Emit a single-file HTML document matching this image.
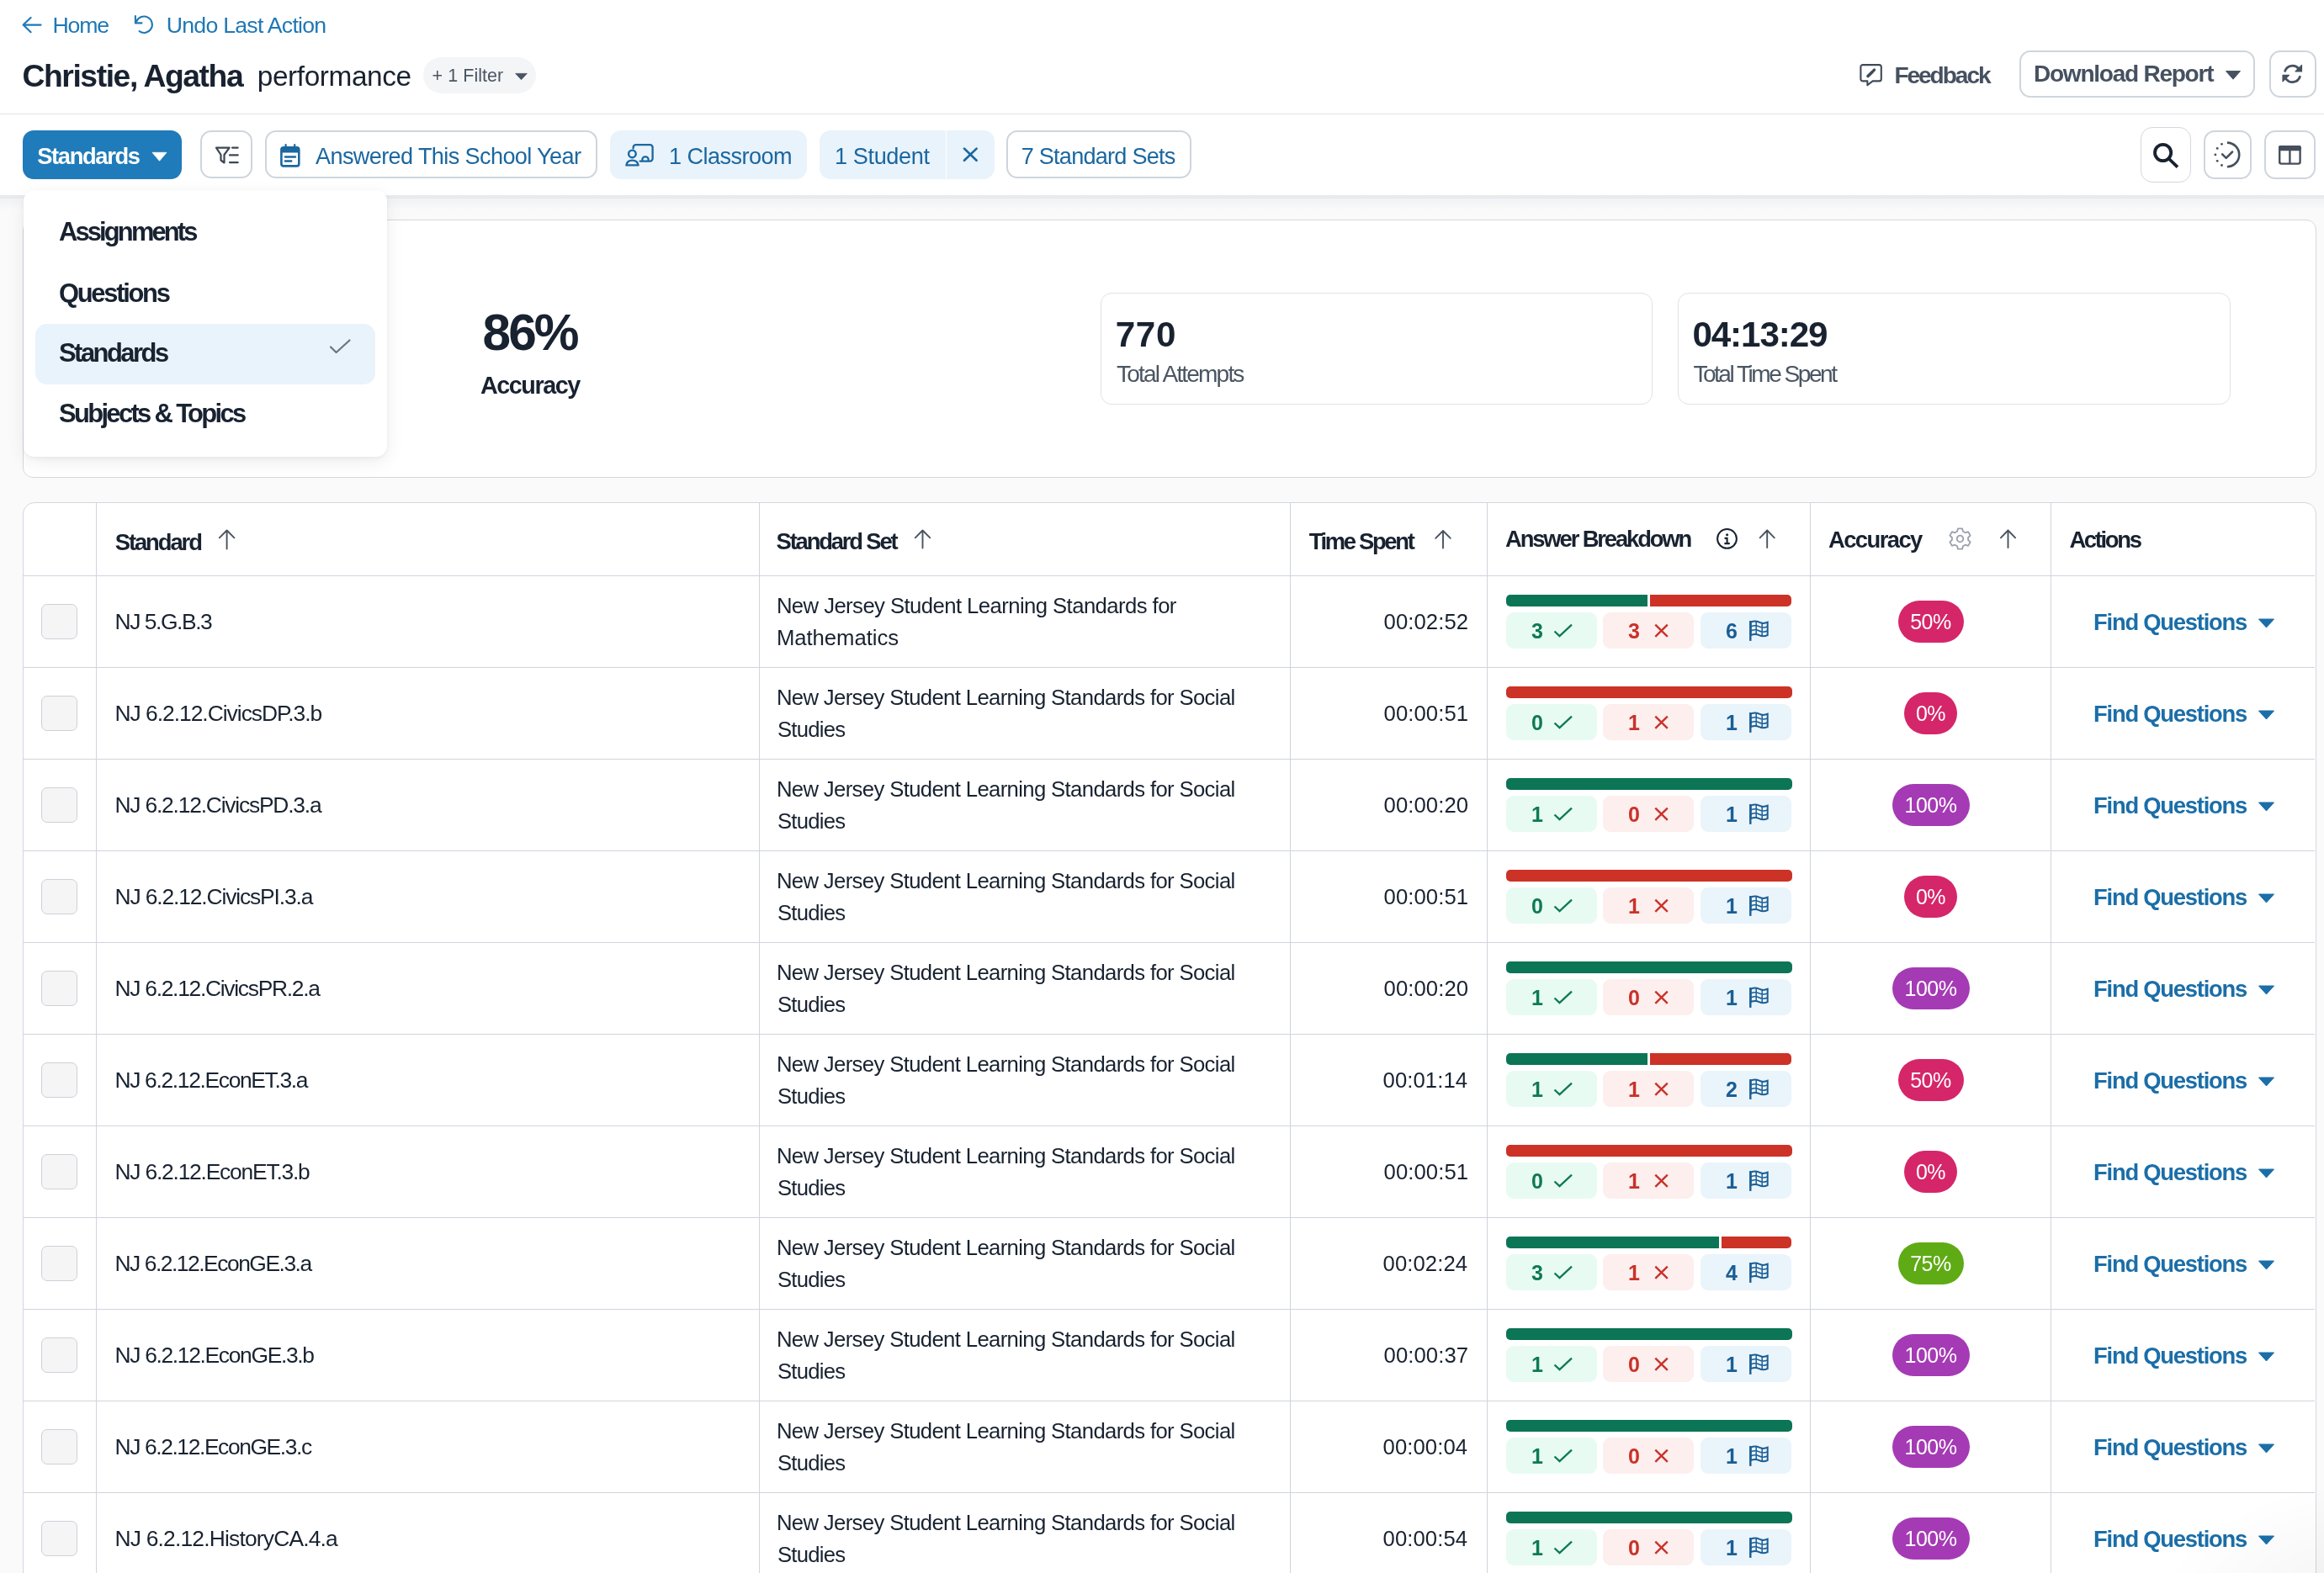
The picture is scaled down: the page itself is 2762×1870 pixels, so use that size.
<!DOCTYPE html><html><head><meta charset="utf-8"><style>
*{box-sizing:border-box;margin:0;padding:0}
html,body{width:2762px;height:1870px;overflow:hidden;background:#fafafb;font-family:"Liberation Sans",sans-serif}
.t{position:absolute;white-space:nowrap}
.abs{position:absolute}
.ic{position:absolute;display:block}
.hdr{position:absolute;left:0;top:0;width:2762px;height:232px;background:#fff}
.hline{position:absolute;left:0;top:135px;width:2762px;height:1px;background:#dfe2e7}
.btn{position:absolute;border:2px solid #cfd5dd;border-radius:13px;background:#fff}
.chip{position:absolute;border-radius:13px;background:#e9f3fb}
.card{position:absolute;background:#fff;border:1px solid #d3d7de;border-radius:12px}
.box{position:absolute;background:#fff;border:1px solid #dfe2e7;border-radius:13px}
.hl{position:absolute;left:28px;width:2723px;height:1px;background:#d0d4dc}
.vl{position:absolute;top:598px;width:1px;height:1280px;background:#d0d4dc}
.cb{position:absolute;left:49px;width:43px;height:42.5px;border:1px solid #cdd1d8;border-radius:7px;background:#f5f5f6}
.bar{position:absolute;height:14px}
.pill{position:absolute;width:108px;height:43px;border-radius:9px}
.pd{position:absolute;width:40px;height:43px;line-height:45px;text-align:center;font-weight:700;font-size:25px;background:transparent!important}
.pg{background:#e8fbf2;color:#0e7a55}
.pr{background:#fcefee;color:#c9322a}
.pb{background:#eaf4fb;color:#1a5e95}
.badge{position:absolute;height:50px;border-radius:25px;color:#fff;font-size:25px;line-height:50px;text-align:center;letter-spacing:-0.5px}
</style></head><body><div style="position:absolute;left:0;top:0;width:2762px;height:1870px;will-change:transform"><div class="hdr"></div><div class="hline"></div><div class="abs" style="left:0;top:232px;width:2762px;height:4px;background:#e9eaed"></div><div class="abs" style="left:0;top:236px;width:2762px;height:14px;background:linear-gradient(#f1f2f3,#fafafb)"></div><div class="abs" style="left:27px;top:155px;width:189px;height:58px;background:#1f7bb9;border-radius:13px"></div><div class="btn" style="left:238px;top:155px;width:62px;height:57px"></div><div class="btn" style="left:315px;top:155px;width:395px;height:57px"></div><div class="chip" style="left:725px;top:155px;width:234px;height:57.5px"></div><div class="chip" style="left:974px;top:155px;width:208px;height:57.5px"></div><div class="abs" style="left:1123.5px;top:155px;width:1.5px;height:57px;background:#fff"></div><div class="btn" style="left:1196px;top:155px;width:220px;height:57px"></div><div class="abs" style="left:503px;top:68px;width:134px;height:43px;background:#f4f5f6;border-radius:22px"></div><div class="btn" style="left:2400px;top:59.5px;width:280px;height:56px"></div><div class="btn" style="left:2696.5px;top:59.5px;width:56px;height:56px"></div><div class="btn" style="left:2544px;top:151px;width:59.5px;height:65.5px;border:1px solid #d3d7dd;border-radius:14px"></div><div class="btn" style="left:2619px;top:155px;width:56.5px;height:57.5px"></div><div class="btn" style="left:2690.7px;top:155px;width:61.5px;height:57.5px"></div><div class="card" style="left:27px;top:261px;width:2725.5px;height:307px"></div><div class="box" style="left:1308px;top:348px;width:656px;height:133px"></div><div class="box" style="left:1994px;top:348px;width:657px;height:133px"></div><div class="card" style="left:27px;top:597px;width:2725.5px;height:1400px;border-radius:14px;overflow:hidden"></div><div class="hl" style="top:684px"></div><div class="vl" style="left:114px"></div><div class="vl" style="left:902px"></div><div class="vl" style="left:1533px"></div><div class="vl" style="left:1767px"></div><div class="vl" style="left:2151px"></div><div class="vl" style="left:2437px"></div><div class="hl" style="top:793px"></div><div class="cb" style="top:717.5px"></div><div class="t" style="left:136.5px;top:726.3px;font-size:26.4px;line-height:26.4px;font-weight:400;color:#182230;letter-spacing:-1.42px;">NJ 5.G.B.3</div><div class="t" style="left:922.9px;top:708.4px;font-size:25.7px;line-height:25.7px;font-weight:400;color:#182230;letter-spacing:-0.57px;">New Jersey Student Learning Standards for</div><div class="t" style="left:922.9px;top:746.2px;font-size:25.7px;line-height:25.7px;font-weight:400;color:#182230;letter-spacing:-0.04px;">Mathematics</div><div class="t" style="left:1644.6px;top:726.7px;font-size:25.7px;line-height:25.7px;font-weight:400;color:#182230;letter-spacing:0.07px">00:02:52</div><div class="bar" style="top:707.1px;left:1790px;width:168.2px;background:#0b7555;border-radius:5px 0 0 5px"></div><div class="bar" style="top:707.1px;left:1961.2px;width:168.2px;background:#cc3226;border-radius:0 5px 5px 0"></div><div class="pill pg" style="top:727.9px;left:1790px"></div><div class="pd pg" style="top:727.9px;left:1807px">3</div><div class="pill pr" style="top:727.9px;left:1905px"></div><div class="pd pr" style="top:727.9px;left:1922px">3</div><div class="pill pb" style="top:727.9px;left:2021px"></div><div class="pd pb" style="top:727.9px;left:2038px">6</div><div class="badge" style="top:714.3px;left:2255.5px;width:78px;background:#d5266a">50%</div><div class="t" style="left:2488.0px;top:726.2px;font-size:27.4px;line-height:27.4px;font-weight:700;color:#1b6ea8;letter-spacing:-1.23px;">Find Questions</div><div class="hl" style="top:902px"></div><div class="cb" style="top:826.5px"></div><div class="t" style="left:136.5px;top:835.3px;font-size:26.4px;line-height:26.4px;font-weight:400;color:#182230;letter-spacing:-1.01px;">NJ 6.2.12.CivicsDP.3.b</div><div class="t" style="left:922.9px;top:817.4px;font-size:25.7px;line-height:25.7px;font-weight:400;color:#182230;letter-spacing:-0.64px;">New Jersey Student Learning Standards for Social</div><div class="t" style="left:923.9px;top:855.2px;font-size:25.7px;line-height:25.7px;font-weight:400;color:#182230;letter-spacing:-0.73px;">Studies</div><div class="t" style="left:1644.6px;top:835.7px;font-size:25.7px;line-height:25.7px;font-weight:400;color:#182230;letter-spacing:0.07px">00:00:51</div><div class="bar" style="top:816.1px;left:1790px;width:339.5px;background:#cc3226;border-radius:5px"></div><div class="pill pg" style="top:836.9px;left:1790px"></div><div class="pd pg" style="top:836.9px;left:1807px">0</div><div class="pill pr" style="top:836.9px;left:1905px"></div><div class="pd pr" style="top:836.9px;left:1922px">1</div><div class="pill pb" style="top:836.9px;left:2021px"></div><div class="pd pb" style="top:836.9px;left:2038px">1</div><div class="badge" style="top:823.3px;left:2263.0px;width:63px;background:#d5266a">0%</div><div class="t" style="left:2488.0px;top:835.2px;font-size:27.4px;line-height:27.4px;font-weight:700;color:#1b6ea8;letter-spacing:-1.23px;">Find Questions</div><div class="hl" style="top:1011px"></div><div class="cb" style="top:935.5px"></div><div class="t" style="left:136.5px;top:944.3px;font-size:26.4px;line-height:26.4px;font-weight:400;color:#182230;letter-spacing:-1.20px;">NJ 6.2.12.CivicsPD.3.a</div><div class="t" style="left:922.9px;top:926.4px;font-size:25.7px;line-height:25.7px;font-weight:400;color:#182230;letter-spacing:-0.64px;">New Jersey Student Learning Standards for Social</div><div class="t" style="left:923.9px;top:964.2px;font-size:25.7px;line-height:25.7px;font-weight:400;color:#182230;letter-spacing:-0.73px;">Studies</div><div class="t" style="left:1644.6px;top:944.7px;font-size:25.7px;line-height:25.7px;font-weight:400;color:#182230;letter-spacing:0.07px">00:00:20</div><div class="bar" style="top:925.1px;left:1790px;width:339.5px;background:#0b7555;border-radius:5px"></div><div class="pill pg" style="top:945.9px;left:1790px"></div><div class="pd pg" style="top:945.9px;left:1807px">1</div><div class="pill pr" style="top:945.9px;left:1905px"></div><div class="pd pr" style="top:945.9px;left:1922px">0</div><div class="pill pb" style="top:945.9px;left:2021px"></div><div class="pd pb" style="top:945.9px;left:2038px">1</div><div class="badge" style="top:932.3px;left:2248.5px;width:92px;background:#a53ab5">100%</div><div class="t" style="left:2488.0px;top:944.2px;font-size:27.4px;line-height:27.4px;font-weight:700;color:#1b6ea8;letter-spacing:-1.23px;">Find Questions</div><div class="hl" style="top:1120px"></div><div class="cb" style="top:1044.5px"></div><div class="t" style="left:136.5px;top:1053.3px;font-size:26.4px;line-height:26.4px;font-weight:400;color:#182230;letter-spacing:-1.13px;">NJ 6.2.12.CivicsPI.3.a</div><div class="t" style="left:922.9px;top:1035.4px;font-size:25.7px;line-height:25.7px;font-weight:400;color:#182230;letter-spacing:-0.64px;">New Jersey Student Learning Standards for Social</div><div class="t" style="left:923.9px;top:1073.2px;font-size:25.7px;line-height:25.7px;font-weight:400;color:#182230;letter-spacing:-0.73px;">Studies</div><div class="t" style="left:1644.6px;top:1053.7px;font-size:25.7px;line-height:25.7px;font-weight:400;color:#182230;letter-spacing:0.07px">00:00:51</div><div class="bar" style="top:1034.1px;left:1790px;width:339.5px;background:#cc3226;border-radius:5px"></div><div class="pill pg" style="top:1054.9px;left:1790px"></div><div class="pd pg" style="top:1054.9px;left:1807px">0</div><div class="pill pr" style="top:1054.9px;left:1905px"></div><div class="pd pr" style="top:1054.9px;left:1922px">1</div><div class="pill pb" style="top:1054.9px;left:2021px"></div><div class="pd pb" style="top:1054.9px;left:2038px">1</div><div class="badge" style="top:1041.3px;left:2263.0px;width:63px;background:#d5266a">0%</div><div class="t" style="left:2488.0px;top:1053.2px;font-size:27.4px;line-height:27.4px;font-weight:700;color:#1b6ea8;letter-spacing:-1.23px;">Find Questions</div><div class="hl" style="top:1229px"></div><div class="cb" style="top:1153.5px"></div><div class="t" style="left:136.5px;top:1162.3px;font-size:26.4px;line-height:26.4px;font-weight:400;color:#182230;letter-spacing:-1.28px;">NJ 6.2.12.CivicsPR.2.a</div><div class="t" style="left:922.9px;top:1144.4px;font-size:25.7px;line-height:25.7px;font-weight:400;color:#182230;letter-spacing:-0.64px;">New Jersey Student Learning Standards for Social</div><div class="t" style="left:923.9px;top:1182.2px;font-size:25.7px;line-height:25.7px;font-weight:400;color:#182230;letter-spacing:-0.73px;">Studies</div><div class="t" style="left:1644.6px;top:1162.7px;font-size:25.7px;line-height:25.7px;font-weight:400;color:#182230;letter-spacing:0.07px">00:00:20</div><div class="bar" style="top:1143.1px;left:1790px;width:339.5px;background:#0b7555;border-radius:5px"></div><div class="pill pg" style="top:1163.9px;left:1790px"></div><div class="pd pg" style="top:1163.9px;left:1807px">1</div><div class="pill pr" style="top:1163.9px;left:1905px"></div><div class="pd pr" style="top:1163.9px;left:1922px">0</div><div class="pill pb" style="top:1163.9px;left:2021px"></div><div class="pd pb" style="top:1163.9px;left:2038px">1</div><div class="badge" style="top:1150.3px;left:2248.5px;width:92px;background:#a53ab5">100%</div><div class="t" style="left:2488.0px;top:1162.2px;font-size:27.4px;line-height:27.4px;font-weight:700;color:#1b6ea8;letter-spacing:-1.23px;">Find Questions</div><div class="hl" style="top:1338px"></div><div class="cb" style="top:1262.5px"></div><div class="t" style="left:136.5px;top:1271.3px;font-size:26.4px;line-height:26.4px;font-weight:400;color:#182230;letter-spacing:-1.33px;">NJ 6.2.12.EconET.3.a</div><div class="t" style="left:922.9px;top:1253.4px;font-size:25.7px;line-height:25.7px;font-weight:400;color:#182230;letter-spacing:-0.64px;">New Jersey Student Learning Standards for Social</div><div class="t" style="left:923.9px;top:1291.2px;font-size:25.7px;line-height:25.7px;font-weight:400;color:#182230;letter-spacing:-0.73px;">Studies</div><div class="t" style="left:1643.6px;top:1271.7px;font-size:25.7px;line-height:25.7px;font-weight:400;color:#182230;letter-spacing:0.07px">00:01:14</div><div class="bar" style="top:1252.1px;left:1790px;width:168.2px;background:#0b7555;border-radius:5px 0 0 5px"></div><div class="bar" style="top:1252.1px;left:1961.2px;width:168.2px;background:#cc3226;border-radius:0 5px 5px 0"></div><div class="pill pg" style="top:1272.9px;left:1790px"></div><div class="pd pg" style="top:1272.9px;left:1807px">1</div><div class="pill pr" style="top:1272.9px;left:1905px"></div><div class="pd pr" style="top:1272.9px;left:1922px">1</div><div class="pill pb" style="top:1272.9px;left:2021px"></div><div class="pd pb" style="top:1272.9px;left:2038px">2</div><div class="badge" style="top:1259.3px;left:2255.5px;width:78px;background:#d5266a">50%</div><div class="t" style="left:2488.0px;top:1271.2px;font-size:27.4px;line-height:27.4px;font-weight:700;color:#1b6ea8;letter-spacing:-1.23px;">Find Questions</div><div class="hl" style="top:1447px"></div><div class="cb" style="top:1371.5px"></div><div class="t" style="left:136.5px;top:1380.3px;font-size:26.4px;line-height:26.4px;font-weight:400;color:#182230;letter-spacing:-1.21px;">NJ 6.2.12.EconET.3.b</div><div class="t" style="left:922.9px;top:1362.4px;font-size:25.7px;line-height:25.7px;font-weight:400;color:#182230;letter-spacing:-0.64px;">New Jersey Student Learning Standards for Social</div><div class="t" style="left:923.9px;top:1400.2px;font-size:25.7px;line-height:25.7px;font-weight:400;color:#182230;letter-spacing:-0.73px;">Studies</div><div class="t" style="left:1644.6px;top:1380.7px;font-size:25.7px;line-height:25.7px;font-weight:400;color:#182230;letter-spacing:0.07px">00:00:51</div><div class="bar" style="top:1361.1px;left:1790px;width:339.5px;background:#cc3226;border-radius:5px"></div><div class="pill pg" style="top:1381.9px;left:1790px"></div><div class="pd pg" style="top:1381.9px;left:1807px">0</div><div class="pill pr" style="top:1381.9px;left:1905px"></div><div class="pd pr" style="top:1381.9px;left:1922px">1</div><div class="pill pb" style="top:1381.9px;left:2021px"></div><div class="pd pb" style="top:1381.9px;left:2038px">1</div><div class="badge" style="top:1368.3px;left:2263.0px;width:63px;background:#d5266a">0%</div><div class="t" style="left:2488.0px;top:1380.2px;font-size:27.4px;line-height:27.4px;font-weight:700;color:#1b6ea8;letter-spacing:-1.23px;">Find Questions</div><div class="hl" style="top:1556px"></div><div class="cb" style="top:1480.5px"></div><div class="t" style="left:136.5px;top:1489.3px;font-size:26.4px;line-height:26.4px;font-weight:400;color:#182230;letter-spacing:-1.47px;">NJ 6.2.12.EconGE.3.a</div><div class="t" style="left:922.9px;top:1471.4px;font-size:25.7px;line-height:25.7px;font-weight:400;color:#182230;letter-spacing:-0.64px;">New Jersey Student Learning Standards for Social</div><div class="t" style="left:923.9px;top:1509.2px;font-size:25.7px;line-height:25.7px;font-weight:400;color:#182230;letter-spacing:-0.73px;">Studies</div><div class="t" style="left:1643.6px;top:1489.7px;font-size:25.7px;line-height:25.7px;font-weight:400;color:#182230;letter-spacing:0.07px">00:02:24</div><div class="bar" style="top:1470.1px;left:1790px;width:253.1px;background:#0b7555;border-radius:5px 0 0 5px"></div><div class="bar" style="top:1470.1px;left:2046.1px;width:83.4px;background:#cc3226;border-radius:0 5px 5px 0"></div><div class="pill pg" style="top:1490.9px;left:1790px"></div><div class="pd pg" style="top:1490.9px;left:1807px">3</div><div class="pill pr" style="top:1490.9px;left:1905px"></div><div class="pd pr" style="top:1490.9px;left:1922px">1</div><div class="pill pb" style="top:1490.9px;left:2021px"></div><div class="pd pb" style="top:1490.9px;left:2038px">4</div><div class="badge" style="top:1477.3px;left:2255.5px;width:78px;background:#5fab15">75%</div><div class="t" style="left:2488.0px;top:1489.2px;font-size:27.4px;line-height:27.4px;font-weight:700;color:#1b6ea8;letter-spacing:-1.23px;">Find Questions</div><div class="hl" style="top:1665px"></div><div class="cb" style="top:1589.5px"></div><div class="t" style="left:136.5px;top:1598.3px;font-size:26.4px;line-height:26.4px;font-weight:400;color:#182230;letter-spacing:-1.32px;">NJ 6.2.12.EconGE.3.b</div><div class="t" style="left:922.9px;top:1580.4px;font-size:25.7px;line-height:25.7px;font-weight:400;color:#182230;letter-spacing:-0.64px;">New Jersey Student Learning Standards for Social</div><div class="t" style="left:923.9px;top:1618.2px;font-size:25.7px;line-height:25.7px;font-weight:400;color:#182230;letter-spacing:-0.73px;">Studies</div><div class="t" style="left:1644.6px;top:1598.7px;font-size:25.7px;line-height:25.7px;font-weight:400;color:#182230;letter-spacing:0.07px">00:00:37</div><div class="bar" style="top:1579.1px;left:1790px;width:339.5px;background:#0b7555;border-radius:5px"></div><div class="pill pg" style="top:1599.9px;left:1790px"></div><div class="pd pg" style="top:1599.9px;left:1807px">1</div><div class="pill pr" style="top:1599.9px;left:1905px"></div><div class="pd pr" style="top:1599.9px;left:1922px">0</div><div class="pill pb" style="top:1599.9px;left:2021px"></div><div class="pd pb" style="top:1599.9px;left:2038px">1</div><div class="badge" style="top:1586.3px;left:2248.5px;width:92px;background:#a53ab5">100%</div><div class="t" style="left:2488.0px;top:1598.2px;font-size:27.4px;line-height:27.4px;font-weight:700;color:#1b6ea8;letter-spacing:-1.23px;">Find Questions</div><div class="hl" style="top:1774px"></div><div class="cb" style="top:1698.5px"></div><div class="t" style="left:136.5px;top:1707.3px;font-size:26.4px;line-height:26.4px;font-weight:400;color:#182230;letter-spacing:-1.39px;">NJ 6.2.12.EconGE.3.c</div><div class="t" style="left:922.9px;top:1689.4px;font-size:25.7px;line-height:25.7px;font-weight:400;color:#182230;letter-spacing:-0.64px;">New Jersey Student Learning Standards for Social</div><div class="t" style="left:923.9px;top:1727.2px;font-size:25.7px;line-height:25.7px;font-weight:400;color:#182230;letter-spacing:-0.73px;">Studies</div><div class="t" style="left:1643.6px;top:1707.7px;font-size:25.7px;line-height:25.7px;font-weight:400;color:#182230;letter-spacing:0.07px">00:00:04</div><div class="bar" style="top:1688.1px;left:1790px;width:339.5px;background:#0b7555;border-radius:5px"></div><div class="pill pg" style="top:1708.9px;left:1790px"></div><div class="pd pg" style="top:1708.9px;left:1807px">1</div><div class="pill pr" style="top:1708.9px;left:1905px"></div><div class="pd pr" style="top:1708.9px;left:1922px">0</div><div class="pill pb" style="top:1708.9px;left:2021px"></div><div class="pd pb" style="top:1708.9px;left:2038px">1</div><div class="badge" style="top:1695.3px;left:2248.5px;width:92px;background:#a53ab5">100%</div><div class="t" style="left:2488.0px;top:1707.2px;font-size:27.4px;line-height:27.4px;font-weight:700;color:#1b6ea8;letter-spacing:-1.23px;">Find Questions</div><div class="hl" style="top:1883px"></div><div class="cb" style="top:1807.5px"></div><div class="t" style="left:136.5px;top:1816.3px;font-size:26.4px;line-height:26.4px;font-weight:400;color:#182230;letter-spacing:-0.81px;">NJ 6.2.12.HistoryCA.4.a</div><div class="t" style="left:922.9px;top:1798.4px;font-size:25.7px;line-height:25.7px;font-weight:400;color:#182230;letter-spacing:-0.64px;">New Jersey Student Learning Standards for Social</div><div class="t" style="left:923.9px;top:1836.2px;font-size:25.7px;line-height:25.7px;font-weight:400;color:#182230;letter-spacing:-0.73px;">Studies</div><div class="t" style="left:1643.6px;top:1816.7px;font-size:25.7px;line-height:25.7px;font-weight:400;color:#182230;letter-spacing:0.07px">00:00:54</div><div class="bar" style="top:1797.1px;left:1790px;width:339.5px;background:#0b7555;border-radius:5px"></div><div class="pill pg" style="top:1817.9px;left:1790px"></div><div class="pd pg" style="top:1817.9px;left:1807px">1</div><div class="pill pr" style="top:1817.9px;left:1905px"></div><div class="pd pr" style="top:1817.9px;left:1922px">0</div><div class="pill pb" style="top:1817.9px;left:2021px"></div><div class="pd pb" style="top:1817.9px;left:2038px">1</div><div class="badge" style="top:1804.3px;left:2248.5px;width:92px;background:#a53ab5">100%</div><div class="t" style="left:2488.0px;top:1816.2px;font-size:27.4px;line-height:27.4px;font-weight:700;color:#1b6ea8;letter-spacing:-1.23px;">Find Questions</div><div class="abs" style="left:2560px;top:1760px;width:260px;height:160px;background:radial-gradient(ellipse at 100% 100%, rgba(0,0,0,0.05), rgba(0,0,0,0) 70%);z-index:3"></div><div class="abs" style="left:28px;top:226px;width:432px;height:317px;background:#fff;border-radius:13px;box-shadow:0 6px 22px rgba(0,0,0,0.07), 0 2px 5px rgba(0,0,0,0.05)"></div><div class="abs" style="left:42px;top:385px;width:403.5px;height:71.5px;background:#e9f3fb;border-radius:14px"></div><div class="t" style="left:62.5px;top:16.5px;font-size:26.7px;line-height:26.7px;font-weight:400;color:#1f78b5;letter-spacing:-1.17px;">Home</div><div class="t" style="left:197.7px;top:16.5px;font-size:26.7px;line-height:26.7px;font-weight:400;color:#1f78b5;letter-spacing:-0.75px;">Undo Last Action</div><div class="t" style="left:26.5px;top:72.3px;font-size:37.3px;line-height:37.3px;font-weight:700;color:#182230;letter-spacing:-1.43px;">Christie, Agatha</div><div class="t" style="left:305.8px;top:73.6px;font-size:33.4px;line-height:33.4px;font-weight:400;color:#182230;letter-spacing:-0.42px;">performance</div><div class="t" style="left:513.6px;top:79.5px;font-size:21.5px;line-height:21.5px;font-weight:400;color:#4a5563;letter-spacing:0.04px;">+ 1 Filter</div><div class="t" style="left:2251.4px;top:76.1px;font-size:28.1px;line-height:28.1px;font-weight:700;color:#465160;letter-spacing:-2.06px;">Feedback</div><div class="t" style="left:2417.0px;top:74.1px;font-size:28.1px;line-height:28.1px;font-weight:700;color:#465160;letter-spacing:-1.29px;">Download Report</div><div class="t" style="left:44.2px;top:171.5px;font-size:27.3px;line-height:27.3px;font-weight:700;color:#ffffff;letter-spacing:-1.34px;">Standards</div><div class="t" style="left:375.0px;top:171.9px;font-size:27.1px;line-height:27.1px;font-weight:400;color:#1b67a0;letter-spacing:-0.62px;">Answered This School Year</div><div class="t" style="left:795.0px;top:171.7px;font-size:27.1px;line-height:27.1px;font-weight:400;color:#1b67a0;letter-spacing:-0.54px;">1 Classroom</div><div class="t" style="left:992.0px;top:171.7px;font-size:27.1px;line-height:27.1px;font-weight:400;color:#1b67a0;letter-spacing:-0.38px;">1 Student</div><div class="t" style="left:1213.7px;top:171.7px;font-size:27.1px;line-height:27.1px;font-weight:400;color:#1b67a0;letter-spacing:-0.76px;">7 Standard Sets</div><div class="t" style="left:70.0px;top:261.4px;font-size:30.9px;line-height:30.9px;font-weight:700;color:#182230;letter-spacing:-2.85px;">Assignments</div><div class="t" style="left:70.0px;top:333.7px;font-size:30.9px;line-height:30.9px;font-weight:700;color:#182230;letter-spacing:-2.27px;">Questions</div><div class="t" style="left:70.0px;top:404.7px;font-size:30.9px;line-height:30.9px;font-weight:700;color:#182230;letter-spacing:-2.49px;">Standards</div><div class="t" style="left:70.0px;top:476.6px;font-size:30.9px;line-height:30.9px;font-weight:700;color:#182230;letter-spacing:-2.64px;">Subjects &amp; Topics</div><div class="t" style="left:573.5px;top:364.7px;font-size:60.4px;line-height:60.4px;font-weight:700;color:#182230;letter-spacing:-2.90px;">86%</div><div class="t" style="left:571.0px;top:444.0px;font-size:28.8px;line-height:28.8px;font-weight:700;color:#182230;letter-spacing:-1.49px;">Accuracy</div><div class="t" style="left:1325.8px;top:377.1px;font-size:42.2px;line-height:42.2px;font-weight:700;color:#182230;letter-spacing:0.60px;">770</div><div class="t" style="left:1327.0px;top:430.6px;font-size:28.1px;line-height:28.1px;font-weight:400;color:#4a5563;letter-spacing:-1.85px;">Total Attempts</div><div class="t" style="left:2011.4px;top:377.1px;font-size:42.2px;line-height:42.2px;font-weight:700;color:#182230;letter-spacing:-1.11px;">04:13:29</div><div class="t" style="left:2012.4px;top:430.6px;font-size:28.1px;line-height:28.1px;font-weight:400;color:#4a5563;letter-spacing:-2.51px;">Total Time Spent</div><div class="t" style="left:136.7px;top:630.7px;font-size:27.4px;line-height:27.4px;font-weight:700;color:#182230;letter-spacing:-2.07px;">Standard</div><div class="t" style="left:922.6px;top:629.8px;font-size:27.4px;line-height:27.4px;font-weight:700;color:#182230;letter-spacing:-2.18px;">Standard Set</div><div class="t" style="left:1555.7px;top:629.7px;font-size:27.4px;line-height:27.4px;font-weight:700;color:#182230;letter-spacing:-2.34px;">Time Spent</div><div class="t" style="left:1789.0px;top:626.7px;font-size:27.4px;line-height:27.4px;font-weight:700;color:#182230;letter-spacing:-2.13px;">Answer Breakdown</div><div class="t" style="left:2173.0px;top:627.7px;font-size:27.4px;line-height:27.4px;font-weight:700;color:#182230;letter-spacing:-1.57px;">Accuracy</div><div class="t" style="left:2459.4px;top:627.7px;font-size:27.4px;line-height:27.4px;font-weight:700;color:#182230;letter-spacing:-2.32px;">Actions</div><svg class="ic" style="left:0;top:0;z-index:5" width="2762" height="1870" viewBox="0 0 2762 1870">
<path d="M36.6 20.9L27.6 29.6L36.6 38.2M28 29.6H48.6" fill="none" stroke="#1f78b5" stroke-width="2.1" stroke-linecap="round" stroke-linejoin="round"/>
<path d="M160.9 19V27.4H168.5" fill="none" stroke="#1f78b5" stroke-width="2.1" stroke-linecap="round" stroke-linejoin="round"/>
<path d="M162.3 25.3A9.7 9.7 0 1 1 165.6 37.2" fill="none" stroke="#1f78b5" stroke-width="2.1" stroke-linecap="round"/>
<path d="M612.7 87.4h13.6l-6.8 7.3z" fill="#4a5563" stroke="#4a5563" stroke-width="0.8" stroke-linejoin="round"/>
<path d="M2214 77.1H2233.3A2.5 2.5 0 0 1 2235.8 79.6V93.9A2.5 2.5 0 0 1 2233.3 96.4H2225.6L2219.4 101.3V96.4H2214A2.5 2.5 0 0 1 2211.4 93.9V79.6A2.5 2.5 0 0 1 2214 77.1Z" fill="none" stroke="#3f4a57" stroke-width="2.1" stroke-linejoin="round"/>
<path d="M2220 90.6L2225.2 85.4" stroke="#3f4a57" stroke-width="3.6" stroke-linecap="round"/>
<path d="M2226.6 84L2227.6 83" stroke="#3f4a57" stroke-width="3.2" stroke-linecap="round"/>
<path d="M2645.5 84.6h17l-8.5 9.6z" fill="#465160" stroke="#465160" stroke-width="1" stroke-linejoin="round"/>
<path d="M2715.6 84.4A9.5 9.5 0 0 1 2732 81.8" fill="none" stroke="#465160" stroke-width="2.8" stroke-linecap="round"/>
<path d="M2735.5 77.5V85H2728z" fill="#465160" stroke="#465160" stroke-width="1.2" stroke-linejoin="round"/>
<path d="M2733.4 91.3A9.5 9.5 0 0 1 2717 94" fill="none" stroke="#465160" stroke-width="2.8" stroke-linecap="round"/>
<path d="M2713 89.4H2720.5L2713 96.9z" fill="#465160" stroke="#465160" stroke-width="1.2" stroke-linejoin="round"/>
<path d="M181 181.3h17l-8.5 10z" fill="#fff" stroke="#fff" stroke-width="0.8" stroke-linejoin="round"/>
<path d="M257 175.6H272.6L266.5 184V193.5L262.5 190.5V184Z" fill="none" stroke="#3d4754" stroke-width="2.2" stroke-linejoin="round"/>
<path d="M276 175.6H282.7M273 184.4H282.7M273 193.1H282.7" stroke="#3d4754" stroke-width="2.2" stroke-linecap="round"/>
<g transform="translate(0 0.9)"><rect x="334.4" y="174.3" width="20.9" height="22.2" rx="2.6" fill="none" stroke="#1b67a0" stroke-width="2.6"/>
<rect x="334.4" y="174.3" width="20.9" height="6.3" fill="#1b67a0"/>
<path d="M339.6 171.2V176M350.2 171.2V176" stroke="#1b67a0" stroke-width="2.2" stroke-linecap="round"/>
<path d="M338.9 185.6H351M338.9 190.6H346.3" stroke="#1b67a0" stroke-width="2.4" stroke-linecap="round"/></g>
<path d="M752.6 176.4V175.2A3 3 0 0 1 755.6 172.2H772.6A3 3 0 0 1 775.6 175.2V188.6A3 3 0 0 1 772.6 191.6H760.6" fill="none" stroke="#1b67a0" stroke-width="2.3" stroke-linecap="round"/>
<path d="M763.4 191.6V189.5A3.2 3.2 0 0 1 766.6 186.3H767.4A3.2 3.2 0 0 1 770.6 189.5V191.6" fill="none" stroke="#1b67a0" stroke-width="2.3"/>
<circle cx="751.4" cy="182.9" r="4.3" fill="none" stroke="#1b67a0" stroke-width="2.4"/>
<path d="M744.4 196.4C744.9 192.4 747.6 190.6 751.4 190.6S758 192.4 758.6 196.4Z" fill="none" stroke="#1b67a0" stroke-width="2.4" stroke-linejoin="round"/>
<path d="M1146 176.6L1160.6 190.8M1160.6 176.6L1146 190.8" stroke="#1b67a0" stroke-width="2.7" stroke-linecap="round"/>
<circle cx="2570.6" cy="181.5" r="9.6" fill="none" stroke="#182230" stroke-width="3.8"/>
<path d="M2578 189L2586.6 197.4" stroke="#182230" stroke-width="3.8" stroke-linecap="square"/>
<path d="M2646.9 169.6A14.3 14.3 0 1 1 2646.9 198.2" fill="none" stroke="#454f5c" stroke-width="2.6"/>
<g fill="#454f5c"><circle cx="2640.5" cy="171.3" r="1.4"/><circle cx="2635.2" cy="176.4" r="1.4"/><circle cx="2632.9" cy="183.9" r="1.4"/><circle cx="2635.2" cy="191.3" r="1.4"/><circle cx="2640.5" cy="196.5" r="1.4"/></g>
<path d="M2641.1 183.3L2645.7 187.9L2653.1 180.5" fill="none" stroke="#454f5c" stroke-width="2.5" stroke-linecap="round" stroke-linejoin="round"/>
<rect x="2709.2" y="174.1" width="24.4" height="20.5" rx="2" fill="none" stroke="#454f5c" stroke-width="2.4"/>
<rect x="2708" y="172.9" width="26.8" height="6.4" rx="2" fill="#454f5c"/>
<path d="M2721.4 179V194" stroke="#454f5c" stroke-width="2.4"/>
<path d="M393 412.5L399.6 419L415.5 404.5" fill="none" stroke="#6b7280" stroke-width="2.2" stroke-linecap="round" stroke-linejoin="round"/>
<g fill="none" stroke="#4a5360" stroke-width="1.9" stroke-linecap="round" stroke-linejoin="round">
<path d="M269.6 652.5V630.5M260.8 639.3L269.6 630.5L278.4 639.3"/>
<path d="M1096.5 651.5V630.5M1087.7 639.3L1096.5 630.5L1105.3 639.3"/>
<path d="M1715 651.5V631M1706.2 639.8L1715 631L1723.8 639.8"/>
<path d="M2100.2 651V630.5M2091.6 639.3L2100.2 630.5L2108.8 639.3"/>
<path d="M2386.5 651V630.5M2377.9 639.3L2386.5 630.5L2395.1 639.3"/>
</g>
<circle cx="2052.5" cy="640.4" r="11.4" fill="none" stroke="#182230" stroke-width="2"/>
<circle cx="2052.6" cy="635.7" r="1.5" fill="#182230"/>
<path d="M2049.6 639.9H2052.6V646.1M2049.4 646.1H2055.8" fill="none" stroke="#182230" stroke-width="2.1"/>
<g transform="translate(2329.5 640.5)"><path d="M-2.6 -12.2H2.6L3.4 -8.8L6.2 -7.2L9.6 -8.3L12.2 -3.9L9.6 -1.5V1.5L12.2 3.9L9.6 8.3L6.2 7.2L3.4 8.8L2.6 12.2H-2.6L-3.4 8.8L-6.2 7.2L-9.6 8.3L-12.2 3.9L-9.6 1.5V-1.5L-12.2 -3.9L-9.6 -8.3L-6.2 -7.2L-3.4 -8.8Z" fill="none" stroke="#9aa1ab" stroke-width="1.8" stroke-linejoin="round"/><circle r="3.8" fill="none" stroke="#9aa1ab" stroke-width="1.8"/></g>
<path d="M1847.5 750.5l6 5.6 14.5-13.5" fill="none" stroke="#0e7a55" stroke-width="2.3"/><path d="M1967.3 742.6l14.5 14.2M1981.8 742.6l-14.5 14.2" fill="none" stroke="#c9322a" stroke-width="2.4"/><g transform="translate(2079.7 738.5)" fill="none" stroke="#1a5e95"><path d="M0.6 -0.5V23.4" stroke-width="2.4"/><path d="M1 1.2c3.5-1.6 6.8-1.6 10 0s6.5 1.6 10 0v15.4c-3.5 1.6-6.8 1.6-10 0s-6.5-1.6-10 0z" stroke-width="2"/><path d="M1 6.4c3.5-1.6 6.8-1.6 10 0s6.5 1.6 10 0M1 11.5c3.5-1.6 6.8-1.6 10 0s6.5 1.6 10 0M7.5 0.5v16M14.5 1.5v16" stroke-width="1.5"/></g><path d="M2684.5 736.0h18l-9 10z" fill="#1b6ea8" stroke="#1b6ea8" stroke-width="1" stroke-linejoin="round"/><path d="M1847.5 859.5l6 5.6 14.5-13.5" fill="none" stroke="#0e7a55" stroke-width="2.3"/><path d="M1967.3 851.6l14.5 14.2M1981.8 851.6l-14.5 14.2" fill="none" stroke="#c9322a" stroke-width="2.4"/><g transform="translate(2079.7 847.5)" fill="none" stroke="#1a5e95"><path d="M0.6 -0.5V23.4" stroke-width="2.4"/><path d="M1 1.2c3.5-1.6 6.8-1.6 10 0s6.5 1.6 10 0v15.4c-3.5 1.6-6.8 1.6-10 0s-6.5-1.6-10 0z" stroke-width="2"/><path d="M1 6.4c3.5-1.6 6.8-1.6 10 0s6.5 1.6 10 0M1 11.5c3.5-1.6 6.8-1.6 10 0s6.5 1.6 10 0M7.5 0.5v16M14.5 1.5v16" stroke-width="1.5"/></g><path d="M2684.5 845.0h18l-9 10z" fill="#1b6ea8" stroke="#1b6ea8" stroke-width="1" stroke-linejoin="round"/><path d="M1847.5 968.5l6 5.6 14.5-13.5" fill="none" stroke="#0e7a55" stroke-width="2.3"/><path d="M1967.3 960.6l14.5 14.2M1981.8 960.6l-14.5 14.2" fill="none" stroke="#c9322a" stroke-width="2.4"/><g transform="translate(2079.7 956.5)" fill="none" stroke="#1a5e95"><path d="M0.6 -0.5V23.4" stroke-width="2.4"/><path d="M1 1.2c3.5-1.6 6.8-1.6 10 0s6.5 1.6 10 0v15.4c-3.5 1.6-6.8 1.6-10 0s-6.5-1.6-10 0z" stroke-width="2"/><path d="M1 6.4c3.5-1.6 6.8-1.6 10 0s6.5 1.6 10 0M1 11.5c3.5-1.6 6.8-1.6 10 0s6.5 1.6 10 0M7.5 0.5v16M14.5 1.5v16" stroke-width="1.5"/></g><path d="M2684.5 954.0h18l-9 10z" fill="#1b6ea8" stroke="#1b6ea8" stroke-width="1" stroke-linejoin="round"/><path d="M1847.5 1077.5l6 5.6 14.5-13.5" fill="none" stroke="#0e7a55" stroke-width="2.3"/><path d="M1967.3 1069.6l14.5 14.2M1981.8 1069.6l-14.5 14.2" fill="none" stroke="#c9322a" stroke-width="2.4"/><g transform="translate(2079.7 1065.5)" fill="none" stroke="#1a5e95"><path d="M0.6 -0.5V23.4" stroke-width="2.4"/><path d="M1 1.2c3.5-1.6 6.8-1.6 10 0s6.5 1.6 10 0v15.4c-3.5 1.6-6.8 1.6-10 0s-6.5-1.6-10 0z" stroke-width="2"/><path d="M1 6.4c3.5-1.6 6.8-1.6 10 0s6.5 1.6 10 0M1 11.5c3.5-1.6 6.8-1.6 10 0s6.5 1.6 10 0M7.5 0.5v16M14.5 1.5v16" stroke-width="1.5"/></g><path d="M2684.5 1063.0h18l-9 10z" fill="#1b6ea8" stroke="#1b6ea8" stroke-width="1" stroke-linejoin="round"/><path d="M1847.5 1186.5l6 5.6 14.5-13.5" fill="none" stroke="#0e7a55" stroke-width="2.3"/><path d="M1967.3 1178.6l14.5 14.2M1981.8 1178.6l-14.5 14.2" fill="none" stroke="#c9322a" stroke-width="2.4"/><g transform="translate(2079.7 1174.5)" fill="none" stroke="#1a5e95"><path d="M0.6 -0.5V23.4" stroke-width="2.4"/><path d="M1 1.2c3.5-1.6 6.8-1.6 10 0s6.5 1.6 10 0v15.4c-3.5 1.6-6.8 1.6-10 0s-6.5-1.6-10 0z" stroke-width="2"/><path d="M1 6.4c3.5-1.6 6.8-1.6 10 0s6.5 1.6 10 0M1 11.5c3.5-1.6 6.8-1.6 10 0s6.5 1.6 10 0M7.5 0.5v16M14.5 1.5v16" stroke-width="1.5"/></g><path d="M2684.5 1172.0h18l-9 10z" fill="#1b6ea8" stroke="#1b6ea8" stroke-width="1" stroke-linejoin="round"/><path d="M1847.5 1295.5l6 5.6 14.5-13.5" fill="none" stroke="#0e7a55" stroke-width="2.3"/><path d="M1967.3 1287.6l14.5 14.2M1981.8 1287.6l-14.5 14.2" fill="none" stroke="#c9322a" stroke-width="2.4"/><g transform="translate(2079.7 1283.5)" fill="none" stroke="#1a5e95"><path d="M0.6 -0.5V23.4" stroke-width="2.4"/><path d="M1 1.2c3.5-1.6 6.8-1.6 10 0s6.5 1.6 10 0v15.4c-3.5 1.6-6.8 1.6-10 0s-6.5-1.6-10 0z" stroke-width="2"/><path d="M1 6.4c3.5-1.6 6.8-1.6 10 0s6.5 1.6 10 0M1 11.5c3.5-1.6 6.8-1.6 10 0s6.5 1.6 10 0M7.5 0.5v16M14.5 1.5v16" stroke-width="1.5"/></g><path d="M2684.5 1281.0h18l-9 10z" fill="#1b6ea8" stroke="#1b6ea8" stroke-width="1" stroke-linejoin="round"/><path d="M1847.5 1404.5l6 5.6 14.5-13.5" fill="none" stroke="#0e7a55" stroke-width="2.3"/><path d="M1967.3 1396.6l14.5 14.2M1981.8 1396.6l-14.5 14.2" fill="none" stroke="#c9322a" stroke-width="2.4"/><g transform="translate(2079.7 1392.5)" fill="none" stroke="#1a5e95"><path d="M0.6 -0.5V23.4" stroke-width="2.4"/><path d="M1 1.2c3.5-1.6 6.8-1.6 10 0s6.5 1.6 10 0v15.4c-3.5 1.6-6.8 1.6-10 0s-6.5-1.6-10 0z" stroke-width="2"/><path d="M1 6.4c3.5-1.6 6.8-1.6 10 0s6.5 1.6 10 0M1 11.5c3.5-1.6 6.8-1.6 10 0s6.5 1.6 10 0M7.5 0.5v16M14.5 1.5v16" stroke-width="1.5"/></g><path d="M2684.5 1390.0h18l-9 10z" fill="#1b6ea8" stroke="#1b6ea8" stroke-width="1" stroke-linejoin="round"/><path d="M1847.5 1513.5l6 5.6 14.5-13.5" fill="none" stroke="#0e7a55" stroke-width="2.3"/><path d="M1967.3 1505.6l14.5 14.2M1981.8 1505.6l-14.5 14.2" fill="none" stroke="#c9322a" stroke-width="2.4"/><g transform="translate(2079.7 1501.5)" fill="none" stroke="#1a5e95"><path d="M0.6 -0.5V23.4" stroke-width="2.4"/><path d="M1 1.2c3.5-1.6 6.8-1.6 10 0s6.5 1.6 10 0v15.4c-3.5 1.6-6.8 1.6-10 0s-6.5-1.6-10 0z" stroke-width="2"/><path d="M1 6.4c3.5-1.6 6.8-1.6 10 0s6.5 1.6 10 0M1 11.5c3.5-1.6 6.8-1.6 10 0s6.5 1.6 10 0M7.5 0.5v16M14.5 1.5v16" stroke-width="1.5"/></g><path d="M2684.5 1499.0h18l-9 10z" fill="#1b6ea8" stroke="#1b6ea8" stroke-width="1" stroke-linejoin="round"/><path d="M1847.5 1622.5l6 5.6 14.5-13.5" fill="none" stroke="#0e7a55" stroke-width="2.3"/><path d="M1967.3 1614.6l14.5 14.2M1981.8 1614.6l-14.5 14.2" fill="none" stroke="#c9322a" stroke-width="2.4"/><g transform="translate(2079.7 1610.5)" fill="none" stroke="#1a5e95"><path d="M0.6 -0.5V23.4" stroke-width="2.4"/><path d="M1 1.2c3.5-1.6 6.8-1.6 10 0s6.5 1.6 10 0v15.4c-3.5 1.6-6.8 1.6-10 0s-6.5-1.6-10 0z" stroke-width="2"/><path d="M1 6.4c3.5-1.6 6.8-1.6 10 0s6.5 1.6 10 0M1 11.5c3.5-1.6 6.8-1.6 10 0s6.5 1.6 10 0M7.5 0.5v16M14.5 1.5v16" stroke-width="1.5"/></g><path d="M2684.5 1608.0h18l-9 10z" fill="#1b6ea8" stroke="#1b6ea8" stroke-width="1" stroke-linejoin="round"/><path d="M1847.5 1731.5l6 5.6 14.5-13.5" fill="none" stroke="#0e7a55" stroke-width="2.3"/><path d="M1967.3 1723.6l14.5 14.2M1981.8 1723.6l-14.5 14.2" fill="none" stroke="#c9322a" stroke-width="2.4"/><g transform="translate(2079.7 1719.5)" fill="none" stroke="#1a5e95"><path d="M0.6 -0.5V23.4" stroke-width="2.4"/><path d="M1 1.2c3.5-1.6 6.8-1.6 10 0s6.5 1.6 10 0v15.4c-3.5 1.6-6.8 1.6-10 0s-6.5-1.6-10 0z" stroke-width="2"/><path d="M1 6.4c3.5-1.6 6.8-1.6 10 0s6.5 1.6 10 0M1 11.5c3.5-1.6 6.8-1.6 10 0s6.5 1.6 10 0M7.5 0.5v16M14.5 1.5v16" stroke-width="1.5"/></g><path d="M2684.5 1717.0h18l-9 10z" fill="#1b6ea8" stroke="#1b6ea8" stroke-width="1" stroke-linejoin="round"/><path d="M1847.5 1840.5l6 5.6 14.5-13.5" fill="none" stroke="#0e7a55" stroke-width="2.3"/><path d="M1967.3 1832.6l14.5 14.2M1981.8 1832.6l-14.5 14.2" fill="none" stroke="#c9322a" stroke-width="2.4"/><g transform="translate(2079.7 1828.5)" fill="none" stroke="#1a5e95"><path d="M0.6 -0.5V23.4" stroke-width="2.4"/><path d="M1 1.2c3.5-1.6 6.8-1.6 10 0s6.5 1.6 10 0v15.4c-3.5 1.6-6.8 1.6-10 0s-6.5-1.6-10 0z" stroke-width="2"/><path d="M1 6.4c3.5-1.6 6.8-1.6 10 0s6.5 1.6 10 0M1 11.5c3.5-1.6 6.8-1.6 10 0s6.5 1.6 10 0M7.5 0.5v16M14.5 1.5v16" stroke-width="1.5"/></g><path d="M2684.5 1826.0h18l-9 10z" fill="#1b6ea8" stroke="#1b6ea8" stroke-width="1" stroke-linejoin="round"/></svg></div></body></html>
